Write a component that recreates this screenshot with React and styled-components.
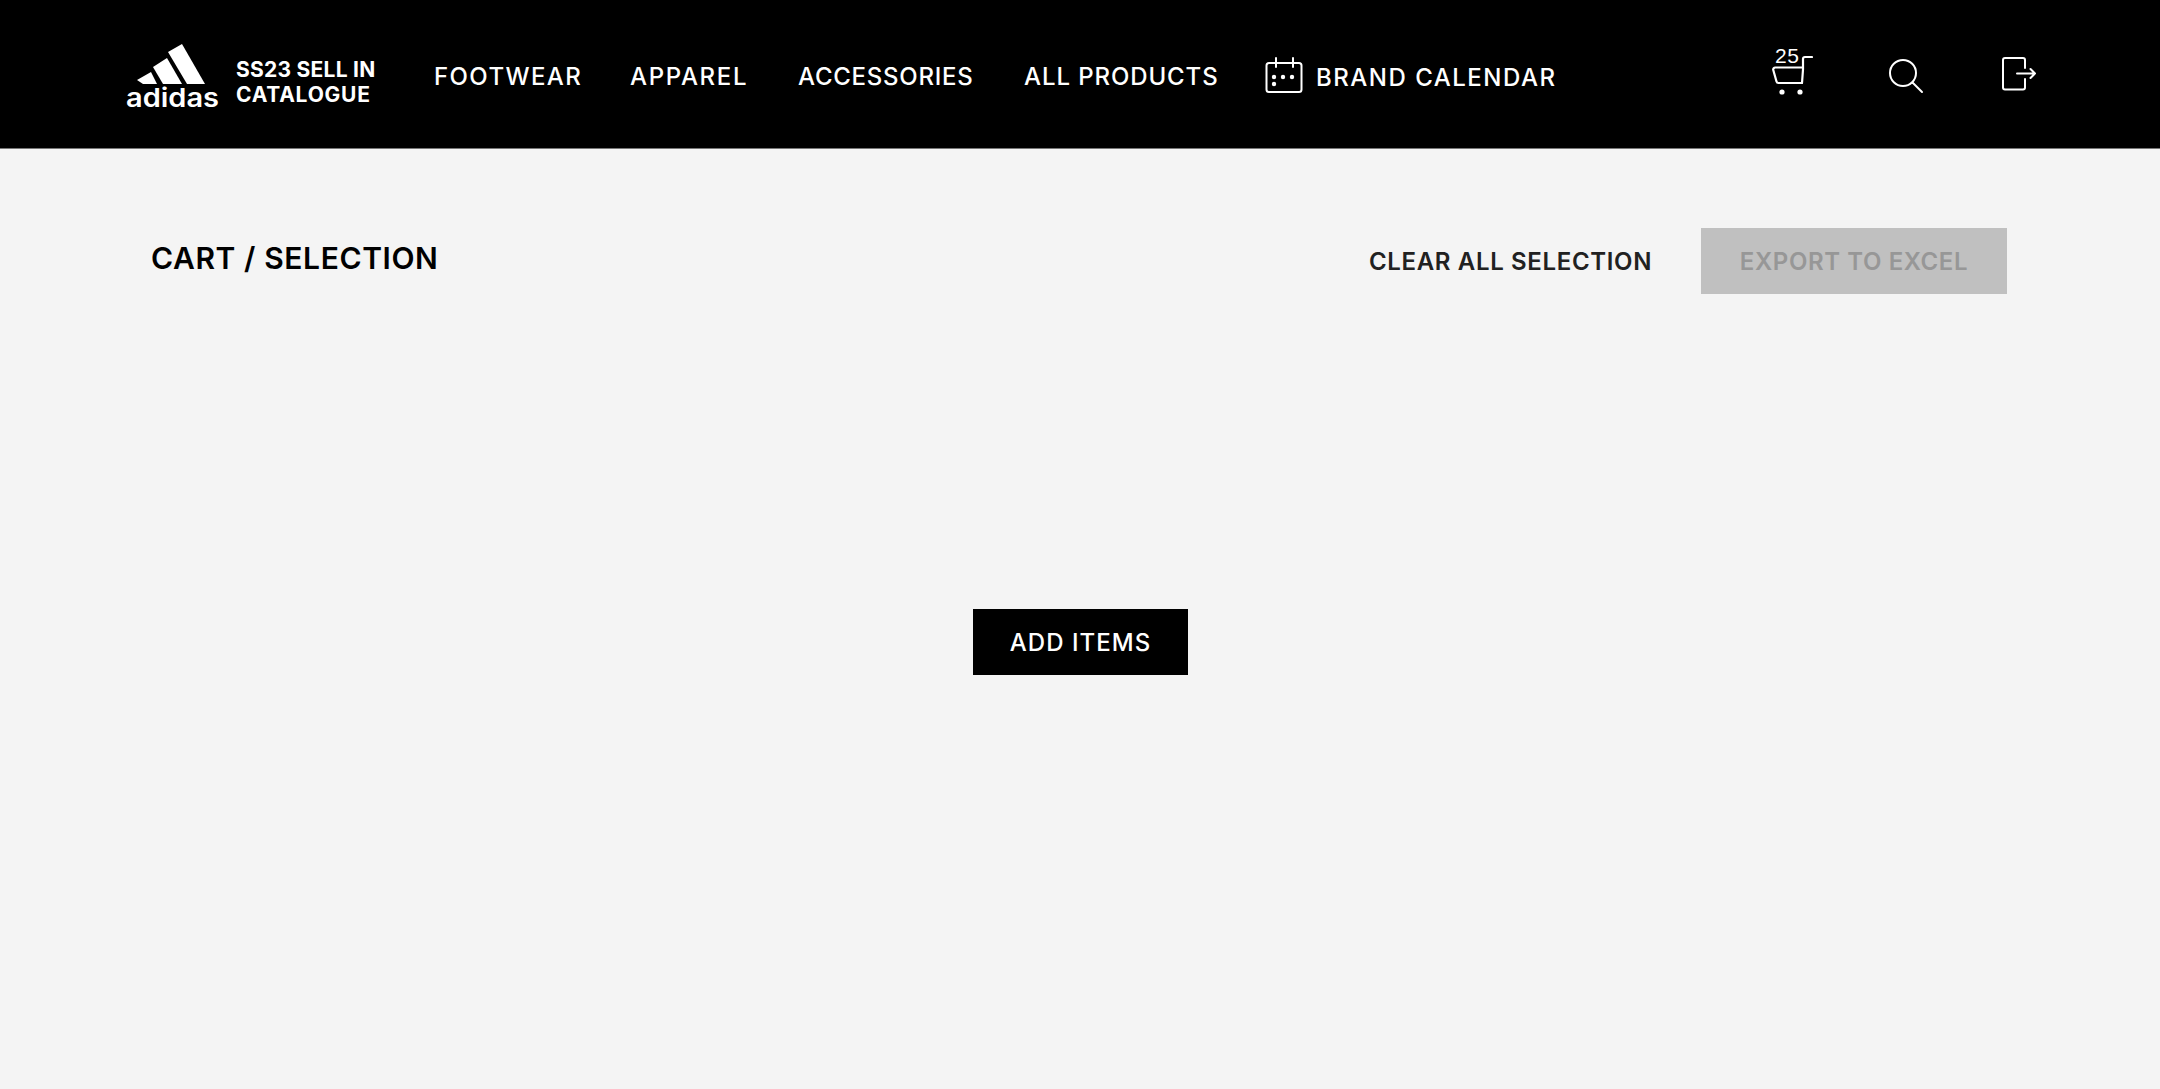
import React from 'react';
import styled, { createGlobalStyle } from 'styled-components';

const GlobalStyle = createGlobalStyle`
  html, body {
    margin: 0;
    height: 100%;
    background: #f4f4f4;
    font-family: "Inter", "Open Sans", sans-serif;
  }
  * { box-sizing: border-box; }
`;

const Page = styled.div`
  min-height: 1089px;
  display: flex;
  flex-direction: column;
  background: #f4f4f4;
  overflow: hidden;
`;

const Header = styled.header`
  height: 149px;
  flex: none;
  background: #000;
  border-bottom: 1px solid #777;
  display: flex;
  align-items: center;
  padding-left: 126px;
  color: #fff;
`;

const Brand = styled.a`
  display: flex;
  align-items: center;
  gap: 17px;
  width: 308px;
  flex: none;

  svg {
    margin-top: 4px;
  }
`;

const BrandText = styled.div`
  font-size: 21px;
  line-height: 25px;
  font-weight: 700;
  white-space: nowrap;
  margin-top: 16px;
`;

const BrandLine = styled.div`
  letter-spacing: ${(p) => p.$ls}px;
`;

const Nav = styled.nav`
  display: flex;
  align-items: center;
  margin-top: 4px;
`;

const NavItem = styled.a`
  font-size: 24px;
  font-weight: 500;
  white-space: nowrap;
  width: ${(p) => p.$w}px;
  letter-spacing: ${(p) => p.$ls}px;
`;

const CalendarLink = styled.a`
  display: flex;
  align-items: center;
  gap: 13px;
  font-size: 24px;
  font-weight: 500;
  letter-spacing: 1.5px;
  white-space: nowrap;
  margin-top: 2px;

  svg {
    margin-top: -3px;
  }
`;

const Tools = styled.div`
  margin-left: auto;
  align-self: flex-start;
  display: flex;
  align-items: flex-start;
  padding: 48px 123px 0 0;
`;

const ToolButton = styled.button`
  position: relative;
  background: none;
  border: 0;
  padding: 0;
  color: #fff;
  display: block;
  width: ${(p) => p.$w}px;
  margin-left: ${(p) => p.$ml || 0}px;
  margin-top: ${(p) => p.$mt || 0}px;

  svg {
    display: block;
  }
`;

const CartCount = styled.span`
  position: absolute;
  left: 3px;
  top: -4px;
  font-size: 21px;
  line-height: 24px;
  font-weight: 500;
  letter-spacing: 0.5px;
  color: #fff;
`;

const Main = styled.main`
  flex: 1;
  padding: 79px 153px 0 151px;
  display: flex;
  flex-direction: column;
`;

const TitleRow = styled.div`
  display: flex;
  align-items: center;
  justify-content: space-between;
`;

const Title = styled.h1`
  margin: 0 0 7px;
  font-size: 30px;
  font-weight: 600;
  letter-spacing: 0.6px;
  color: #000;
`;

const Actions = styled.div`
  display: flex;
  align-items: center;
  gap: 49px;
`;

const ClearButton = styled.button`
  background: none;
  border: 0;
  padding: 0;
  font: 600 24px "Inter", sans-serif;
  letter-spacing: 0.65px;
  color: #212121;
`;

const ExportButton = styled.button`
  width: 306px;
  height: 66px;
  border: 0;
  background: #c0c0c0;
  color: #979797;
  font: 600 24px "Inter", sans-serif;
  letter-spacing: 0.6px;
`;

const Empty = styled.div`
  display: flex;
  justify-content: center;
  margin-top: 315px;
`;

const AddButton = styled.button`
  width: 215px;
  height: 66px;
  border: 0;
  background: #000;
  color: #fff;
  font: 500 24px "Inter", sans-serif;
  letter-spacing: 1.05px;
  margin-left: 3px;
`;

const AdidasLogo = () => (
  <svg width="93" height="80" viewBox="126 36 93 80" fill="#fff">
    <polygon points="168,52 182,44 205,84 187,84" />
    <polygon points="153,67 167,58 182,84 163,84" />
    <polygon points="137,80 151,72 157,84 143,84" />
    <text x="126" y="107" fontFamily="Inter, sans-serif" fontSize="26" fontWeight="600" textLength="93" lengthAdjust="spacingAndGlyphs">adidas</text>
  </svg>
);

const CalendarIcon = () => (
  <svg width="38" height="37" viewBox="0 0 38 37" fill="none" stroke="#fff" strokeWidth="2" strokeLinecap="round" strokeLinejoin="round">
    <path d="M11 6H4a2.500 2.500 0 0 0-2.500 2.500v24A2.500 2.500 0 0 0 4 35h30a2.500 2.500 0 0 0 2.500-2.500v-24A2.500 2.500 0 0 0 34 6h-6" />
    <path d="M11 1v9M28 1v9M11 6h17" />
    <g fill="#fff" stroke="none">
      <circle cx="9" cy="20" r="2.200" />
      <circle cx="18" cy="20" r="2.200" />
      <circle cx="27" cy="20" r="2.200" />
      <circle cx="9" cy="27" r="2.200" />
    </g>
  </svg>
);

const CartIcon = () => (
  <svg width="41" height="47" viewBox="0 0 41 47" fill="none" stroke="#fff" strokeWidth="2.200" strokeLinecap="round" strokeLinejoin="round">
    <path d="M40 9h-7a2 2 0 0 0-2 2v10.500L30 35" />
    <path d="M31 19.500H3.200a2 2 0 0 0-2 2.300L4.500 33.500a2 2 0 0 0 2 1.500H30" />
    <circle cx="10" cy="44" r="2.600" fill="#fff" stroke="none" />
    <circle cx="28" cy="44" r="2.600" fill="#fff" stroke="none" />
  </svg>
);

const SearchIcon = () => (
  <svg width="36" height="36" viewBox="0 0 36 36" fill="none" stroke="#fff" strokeWidth="2" strokeLinecap="round">
    <circle cx="15" cy="15" r="13" />
    <path d="M24.500 24.500L34 34" />
  </svg>
);

const LogoutIcon = () => (
  <svg width="36" height="36" viewBox="0 0 36 36" fill="none" stroke="#fff" strokeWidth="2" strokeLinecap="round" strokeLinejoin="round">
    <path d="M24 12V4a2 2 0 0 0-2-2H4a2 2 0 0 0-2 2v27.500a2 2 0 0 0 2 2h18a2 2 0 0 0 2-2V23" />
    <path d="M16 17.500h18M29.500 13L34 17.500 29.500 22" />
  </svg>
);

export default function App() {
  return (
    <Page>
      <GlobalStyle />
      <Header>
        <Brand>
          <AdidasLogo />
          <BrandText>
            <BrandLine $ls={0.25}>SS23 SELL IN</BrandLine>
            <BrandLine $ls={0.75}>CATALOGUE</BrandLine>
          </BrandText>
        </Brand>
        <Nav>
          <NavItem $w={196} $ls={1.4}>FOOTWEAR</NavItem>
          <NavItem $w={168} $ls={1.65}>APPAREL</NavItem>
          <NavItem $w={226} $ls={0.75}>ACCESSORIES</NavItem>
          <NavItem $w={241} $ls={0.9}>ALL PRODUCTS</NavItem>
          <CalendarLink>
            <CalendarIcon />
            BRAND CALENDAR
          </CalendarLink>
        </Nav>
        <Tools>
          <ToolButton $w={41}>
            <CartIcon />
            <CartCount>25</CartCount>
          </ToolButton>
          <ToolButton $w={36} $ml={75} $mt={10}>
            <SearchIcon />
          </ToolButton>
          <ToolButton $w={36} $ml={77} $mt={8}>
            <LogoutIcon />
          </ToolButton>
        </Tools>
      </Header>
      <Main>
        <TitleRow>
          <Title>CART / SELECTION</Title>
          <Actions>
            <ClearButton>CLEAR ALL SELECTION</ClearButton>
            <ExportButton>EXPORT TO EXCEL</ExportButton>
          </Actions>
        </TitleRow>
        <Empty>
          <AddButton>ADD ITEMS</AddButton>
        </Empty>
      </Main>
    </Page>
  );
}
